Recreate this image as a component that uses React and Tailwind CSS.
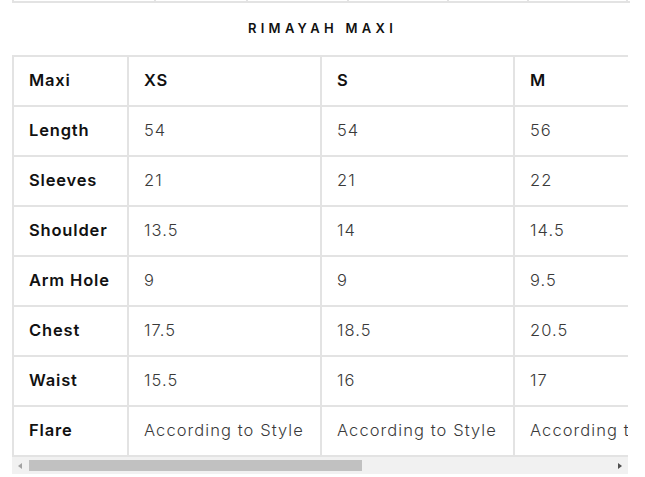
import React from "react";

const sizes = ["XS", "S", "M", "L", "XL"];
const rows = [
  ["Length", ["54", "54", "56", "56", "58"]],
  ["Sleeves", ["21", "21", "22", "22", "23"]],
  ["Shoulder", ["13.5", "14", "14.5", "15", "15.5"]],
  ["Arm Hole", ["9", "9", "9.5", "10", "10.5"]],
  ["Chest", ["17.5", "18.5", "20.5", "22", "23.5"]],
  ["Waist", ["15.5", "16", "17", "18.5", "20"]],
  ["Flare", ["According to Style", "According to Style", "According to Style", "According to Style", "According to Style"]],
];

function Row({ label, values, header, last }) {
  return (
    <div className={"flex h-[50px] border-t-2 border-[#e3e3e3] " + (last ? "border-b-2 h-[52px]" : "")}>
      <div className="w-[115px] shrink-0 border-l-2 border-[#e3e3e3] flex items-center pl-[15px] pb-[2px] text-[16.5px] tracking-[0.05em] font-semibold text-[#111]">
        {label}
      </div>
      {values.map((v, i) => (
        <div
          key={i}
          className={
            "w-[193px] shrink-0 border-l-2 border-[#e3e3e3] flex items-center pl-[15px] pb-[2px] text-[16.5px] whitespace-nowrap overflow-hidden " +
            (header ? "font-semibold tracking-[0.05em] text-[#111]" : "font-light tracking-[0.065em] text-[#3a3a3a]")
          }
        >
          {v}
        </div>
      ))}
      <div className="w-0 border-l-2 border-[#e3e3e3]" />
    </div>
  );
}

export default function App() {
  return (
    <div className="w-[645px] h-[477px] bg-white overflow-hidden font-['Inter',sans-serif]">
      <div className="ml-[12px] w-[618px] h-[3px] flex border-b-2 border-[#e3e3e3]">
        <div className="w-[142px] border-l-2 border-[#e3e3e3]" />
        <div className="w-[92px] border-l-2 border-[#e3e3e3]" />
        <div className="w-[101px] border-l-2 border-[#e3e3e3]" />
        <div className="w-[100px] border-l-2 border-[#e3e3e3]" />
        <div className="w-[80px] border-l-2 border-[#e3e3e3]" />
        <div className="w-[101px] border-l-2 border-r-2 border-[#e3e3e3]" />
      </div>
      <div className="h-[52px] flex items-center justify-center">
        <span className="text-[13px] font-semibold tracking-[0.33em] text-[#111]">RIMAYAH MAXI</span>
      </div>
      <div className="ml-[12px] w-[616px] overflow-hidden">
        <div className="w-[1083px]">
          <Row label="Maxi" values={sizes} header />
          {rows.map(([l, v], i) => (
            <Row key={l} label={l} values={v} last={i === rows.length - 1} />
          ))}
        </div>
      </div>
      <div className="ml-[12px] w-[616px] h-[17px] bg-[#f1f1f1] flex items-center">
        <div className="w-[16px] flex items-center justify-center">
          <div className="w-0 h-0 border-y-[3.5px] border-y-transparent border-r-[4px] border-r-[#a3a3a3]" />
        </div>
        <div className="flex-1 h-[11px] flex">
          <div className="ml-[1px] w-[333px] h-[11px] bg-[#c1c1c1]" />
        </div>
        <div className="w-[16px] flex items-center justify-center">
          <div className="w-0 h-0 border-y-[3.5px] border-y-transparent border-l-[4px] border-l-[#505050]" />
        </div>
      </div>
    </div>
  );
}
